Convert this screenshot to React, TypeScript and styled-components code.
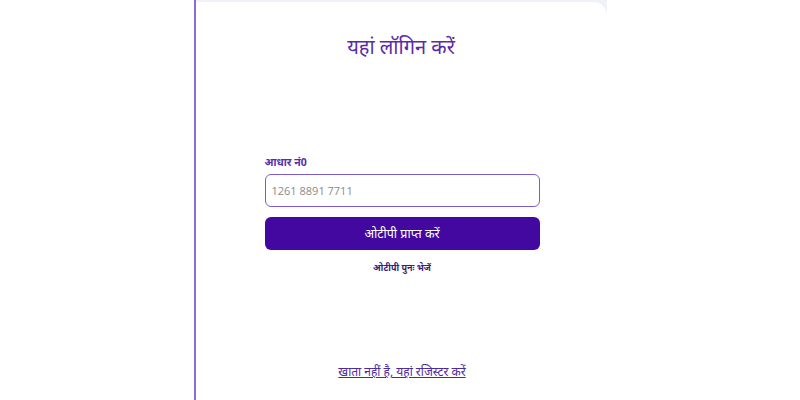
import React from 'react';
import styled, { createGlobalStyle } from 'styled-components';

const GlobalStyle = createGlobalStyle`
  html, body, #root {
    margin: 0;
    height: 100%;
  }
  body {
    background: #ffffff;
    font-family: 'Noto Sans', 'Lato', sans-serif;
  }
`;

const Page = styled.div`
  display: flex;
  justify-content: center;
  height: 100vh;
  background: #ffffff;
`;

const Panel = styled.div`
  width: 413px;
  box-sizing: border-box;
  border-left: 2px solid #8a6bd8;
  background: #eff2f8;
  padding-top: 2px;
  display: flex;
`;

const Card = styled.div`
  flex: 1;
  background: #ffffff;
  border-top-right-radius: 14px;
  display: flex;
  flex-direction: column;
  align-items: center;
`;

const Title = styled.h1`
  margin: 32px 0 0;
  font-size: 20px;
  line-height: 26px;
  font-weight: 400;
  color: #5a2ba8;
`;

const Form = styled.form`
  width: 275px;
  margin-top: 95px;
  margin-left: 2px;
  display: flex;
  flex-direction: column;
`;

const Label = styled.label`
  font-size: 10.5px;
  line-height: 14px;
  font-weight: 700;
  color: #5a2ba8;
`;

const Input = styled.input`
  margin-top: 5px;
  height: 33px;
  box-sizing: border-box;
  border: 1px solid #7d5cd2;
  border-radius: 6px;
  padding: 0 6px;
  font-family: 'Open Sans', 'Noto Sans', sans-serif;
  font-size: 11px;
  color: #333;
  outline: none;

  &::placeholder {
    color: #8a8a8a;
  }
`;

const SubmitButton = styled.button`
  margin-top: 10px;
  height: 33px;
  border: none;
  border-radius: 6px;
  background: #43089f;
  color: #ffffff;
  font-family: 'Noto Sans', sans-serif;
  font-size: 12.5px;
  cursor: pointer;
`;

const Resend = styled.div`
  margin-top: 11px;
  text-align: center;
  font-size: 9px;
  line-height: 14px;
  font-weight: 700;
  color: #3b1b80;
  cursor: pointer;
`;

const Spacer = styled.div`
  flex: 1;
`;

const RegisterLink = styled.a`
  margin-bottom: 20px;
  margin-left: 2px;
  font-size: 12px;
  line-height: 16px;
  color: #4b2a9e;
  text-decoration: underline;
  cursor: pointer;
`;

const App: React.FC = () => {
  return (
    <>
      <GlobalStyle />
      <Page>
        <Panel>
          <Card>
            <Title>यहां लॉगिन करें</Title>
            <Form onSubmit={(e) => e.preventDefault()}>
              <Label htmlFor='aadhaar'>आधार नं0</Label>
              <Input id='aadhaar' placeholder='1261 8891 7711' />
              <SubmitButton type='submit'>ओटीपी प्राप्त करें</SubmitButton>
              <Resend>ओटीपी पुनः भेजें</Resend>
            </Form>
            <Spacer />
            <RegisterLink>खाता नहीं है, यहां रजिस्टर करें</RegisterLink>
          </Card>
        </Panel>
      </Page>
    </>
  );
};

export default App;
